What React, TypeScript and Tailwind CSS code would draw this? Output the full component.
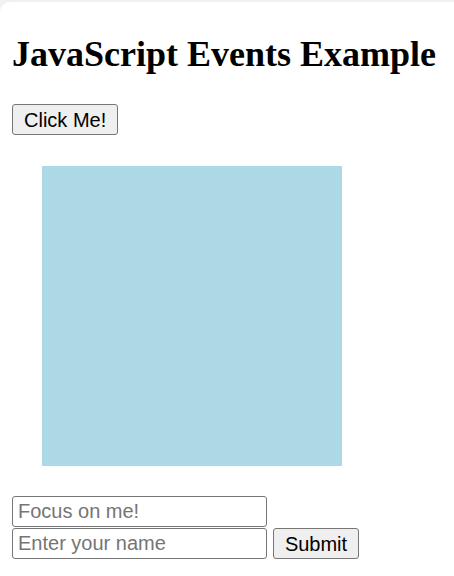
export default function App() {
  return (
    <div className="min-h-[576px] w-[454px] bg-[#f1f1f1] pt-[2px]">
      <div className="min-h-[574px] rounded-tl-[10px] bg-white px-[12px] pt-[29px] font-['Liberation_Sans',Arial,sans-serif]">
        <h1 className="font-['Liberation_Serif','Times_New_Roman',serif] text-[36px] leading-[46px] font-bold whitespace-nowrap text-black">
          JavaScript Events Example
        </h1>
        <div className="mt-[27px] flex">
          <button className="h-[31px] rounded-[3px] border border-[#767676] bg-[#efefef] px-[11px] text-[20px] leading-[22px] text-black">
            Click Me!
          </button>
        </div>
        <div className="mt-[31px] ml-[30px] h-[300px] w-[300px] bg-[#add8e6]" />
        <div className="mt-[30px] flex flex-col gap-[1px]">
          <input
            placeholder="Focus on me!"
            className="h-[31px] w-[255px] rounded-[3px] border border-[#767676] px-[5px] text-[20px] text-black placeholder:text-[#757575]"
          />
          <div className="flex items-center gap-[6px]">
            <input
              placeholder="Enter your name"
              className="h-[31px] w-[255px] rounded-[3px] border border-[#767676] px-[5px] text-[20px] text-black placeholder:text-[#757575]"
            />
            <button className="h-[31px] w-[86px] rounded-[3px] border border-[#767676] bg-[#efefef] text-[20px] text-black">
              Submit
            </button>
          </div>
        </div>
      </div>
    </div>
  );
}
